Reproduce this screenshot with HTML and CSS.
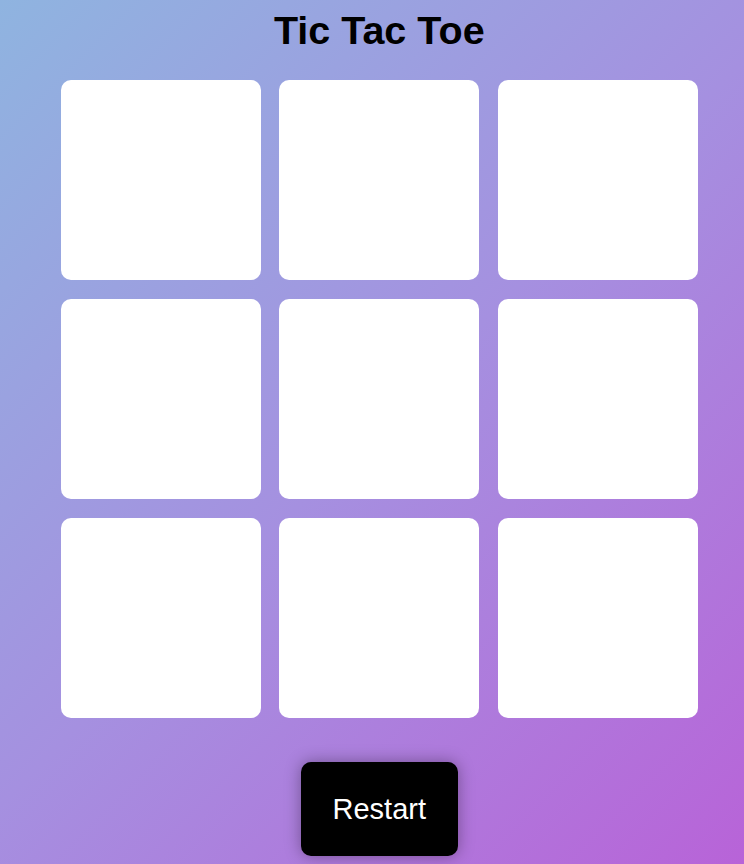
FILE: index.html
```html
<!DOCTYPE html>
<html lang="en">
<head>
<meta charset="utf-8">
<title>Tic Tac Toe</title>
<link rel="stylesheet" href="styles.css">
</head>
<body>
<main class="game">
  <h1 class="title">Tic Tac Toe</h1>
  <div class="board">
    <div class="cell"></div>
    <div class="cell"></div>
    <div class="cell"></div>
    <div class="cell"></div>
    <div class="cell"></div>
    <div class="cell"></div>
    <div class="cell"></div>
    <div class="cell"></div>
    <div class="cell"></div>
  </div>
  <button class="restart">Restart</button>
</main>
</body>
</html>
```
FILE: styles.css
```css
html, body {
  margin: 0;
  height: 100%;
}
body {
  background: linear-gradient(135deg, #8fb4e0 0%, #a590e0 50%, #b863d8 100%);
  font-family: "Liberation Sans", Arial, sans-serif;
  overflow: hidden;
}
.game {
  display: flex;
  flex-direction: column;
  align-items: center;
  padding: 8px 0 0 14.5px;
}
.title {
  margin: 0;
  font-size: 39.5px;
  font-weight: bold;
  line-height: 44px;
  color: #000;
}
.board {
  margin-top: 28px;
  display: grid;
  grid-template-columns: repeat(3, 200px);
  grid-template-rows: repeat(3, 200px);
  column-gap: 18.5px;
  row-gap: 19px;
}
.cell {
  background: #fff;
  border-radius: 10px;
}
.restart {
  margin-top: 44px;
  width: 157px;
  height: 94px;
  background: #000;
  color: #fff;
  border: none;
  border-radius: 10px;
  font-family: "Liberation Sans", Arial, sans-serif;
  font-size: 29px;
  box-shadow: 0 0 16px rgba(0, 0, 0, 0.35);
  cursor: pointer;
}
```
